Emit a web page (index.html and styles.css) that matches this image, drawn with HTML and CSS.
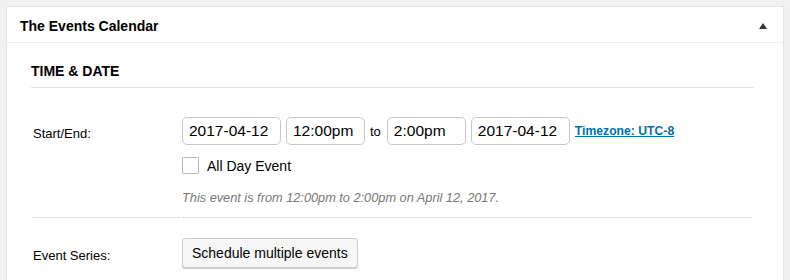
FILE: index.html
```html
<!DOCTYPE html>
<html>
<head>
<meta charset="utf-8">
<link rel="stylesheet" href="styles.css">
</head>
<body>
<div class="postbox">
  <div class="hndle">
    <span class="hndle-title">The Events Calendar</span>
    <span class="toggle"></span>
  </div>
  <div class="inside">
    <div class="section-title">TIME &amp; DATE</div>
    <table class="eventtable">
      <tr>
        <td class="label label-first">Start/End:</td>
        <td class="value value-first">
          <div class="datetime">
            <input class="field date" type="text" value="2017-04-12">
            <input class="field time" type="text" value="12:00pm">
            <span class="to">to</span>
            <input class="field time" type="text" value="2:00pm">
            <input class="field date" type="text" value="2017-04-12">
            <a class="tz" href="#">Timezone: UTC-8</a>
          </div>
          <label class="allday"><span class="checkbox"></span>All Day Event</label>
          <div class="note">This event is from 12:00pm to 2:00pm on April 12, 2017.</div>
        </td>
      </tr>
      <tr>
        <td class="label label-second">Event Series:</td>
        <td class="value value-second">
          <button class="button" type="button">Schedule multiple events</button>
        </td>
      </tr>
    </table>
  </div>
</div>
</body>
</html>
```

FILE: styles.css
```css
html, body {
  margin: 0;
  height: 100%;
}
body {
  background: #f1f1f1;
  padding: 6px 6px 0 6px;
  box-sizing: border-box;
  font-family: "Liberation Sans", Arial, sans-serif;
  color: #23282d;
  overflow: hidden;
}
.postbox {
  background: #fff;
  border: 1px solid #e5e5e5;
  border-bottom: none;
  box-shadow: 0 1px 1px rgba(0,0,0,0.04);
  height: 100%;
  box-sizing: border-box;
}
.hndle {
  height: 35px;
  display: flex;
  align-items: center;
  justify-content: space-between;
  padding: 0 16px 0 13px;
  border-bottom: 1px solid #eee;
}
.hndle-title {
  font-size: 14px;
  font-weight: bold;
  color: #000;
  margin-top: 2px;
}
.toggle {
  width: 0;
  height: 0;
  border-left: 4px solid transparent;
  border-right: 4px solid transparent;
  border-bottom: 6px solid #32373c;
  margin-top: 3px;
}
.inside {
  padding: 0 29px 0 24px;
}
.section-title {
  font-size: 14px;
  font-weight: bold;
  color: #000;
  line-height: 16px;
  padding: 20px 0 8px;
  border-bottom: 1px solid #e1e1e1;
}
.eventtable {
  width: 100%;
  border-collapse: separate;
  border-spacing: 2px;
  margin-left: 0;
}
.eventtable td {
  vertical-align: top;
  padding: 0;
}
.label {
  width: 147px;
  font-size: 13px;
  color: #000;
}
.label-first {
  padding-top: 36px !important;
  border-bottom: 1px solid #e1e1e1;
}
.value-first {
  padding-top: 27px !important;
  padding-bottom: 12px !important;
  border-bottom: 1px solid #e1e1e1;
}
.label-second {
  padding-top: 28px !important;
}
.value-second {
  padding-top: 18px !important;
}
.datetime {
  display: flex;
  align-items: center;
  gap: 5px;
}
.field {
  height: 28px;
  box-sizing: border-box;
  border: 1px solid #c8c8c8;
  border-radius: 5px;
  padding: 0 6px;
  font-family: "Liberation Sans", Arial, sans-serif;
  font-size: 15.5px;
  color: #000;
  background: #fff;
  margin: 0;
}
.field.date { width: 99px; }
.field.time { width: 79px; }
.to {
  font-size: 13px;
  color: #000;
  margin-right: 1px;
}
.tz {
  font-size: 12.2px;
  font-weight: bold;
  color: #0073aa;
  text-decoration: underline;
  margin-left: 0;
  margin-top: -1px;
}
.allday {
  display: flex;
  align-items: center;
  margin-top: 12px;
  font-size: 14px;
  color: #000;
}
.checkbox {
  width: 17px;
  height: 17px;
  box-sizing: border-box;
  border: 1px solid #b4b9be;
  border-radius: 1px;
  background: #fff;
  margin-right: 8px;
}
.note {
  margin-top: 16px;
  font-size: 12.75px;
  font-style: italic;
  color: #777;
}
.button {
  height: 30px;
  box-sizing: border-box;
  padding: 0 9px;
  border: 1px solid #ccc;
  border-radius: 3px;
  background: #f7f7f7;
  box-shadow: 0 1px 0 #ccc;
  font-family: "Liberation Sans", Arial, sans-serif;
  font-size: 14px;
  color: #000;
  margin: 0;
}
```
